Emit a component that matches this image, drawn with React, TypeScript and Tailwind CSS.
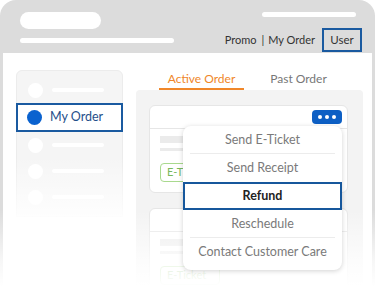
import { ReactNode } from "react";

const font = { fontFamily: "Lato, 'Open Sans', sans-serif" };

const SideRow = () => (
  <div className="flex h-[26px] items-center gap-[9px] pl-[11px]">
    <span className="h-[15px] w-[15px] rounded-full bg-white" />
    <span className="h-[4px] w-[52px] rounded-full bg-white" />
  </div>
);

const DotsButton = () => (
  <div className="flex h-[14px] w-[30px] items-center justify-center gap-[3px] rounded-[4px] bg-[#0d5fc4]">
    <span className="h-[4px] w-[4px] rounded-full bg-white" />
    <span className="h-[4px] w-[4px] rounded-full bg-white" />
    <span className="h-[4px] w-[4px] rounded-full bg-white" />
  </div>
);

const OrderCard = () => (
  <div className="h-[88px] rounded-[6px] border border-[#e6e6e6] bg-white">
    <div className="flex h-[23px] items-center justify-end border-b border-[#e6e6e6] pr-[5px]">
      <DotsButton />
    </div>
    <div className="flex flex-col pl-[10px] pt-[7px]">
      <span className="h-[7px] w-[110px] bg-[#ebebeb]" />
      <span className="mt-[5px] h-[3px] w-[110px] bg-[#ebebeb]" />
      <span className="mt-[12px] flex h-[19px] w-[60px] items-center rounded-[4px] border border-[#a9d98e] pl-[6px] text-[11px] text-[#78b85a]">
        E-Ticket
      </span>
    </div>
  </div>
);

const MenuItem = ({ children, active, sep }: { children: ReactNode; active?: boolean; sep?: boolean }) => (
  <div
    className={
      active
        ? "flex h-[28px] items-center justify-center border-2 border-[#16579c] text-[12.5px] font-bold text-[#222]"
        : "relative flex h-[28px] items-center justify-center text-[12.5px] text-[#7a7a7a]"
    }
  >
    {sep && <span className="absolute inset-x-[7px] bottom-0 h-px bg-[#ececec]" />}
    {children}
  </div>
);

export default function App() {
  return (
    <div className="relative h-[300px] w-[378px] overflow-hidden bg-white" style={font}>
      <div className="h-[300px] w-[375px] rounded-t-[16px] bg-[#dcdcdc] px-[3px]">
        {/* header */}
        <div className="flex h-[53px] justify-between pl-[17px] pr-[10px] pt-[12px]">
          <div className="flex flex-col">
            <span className="h-[17px] w-[81px] rounded-full bg-white" />
            <span className="mt-[9px] h-[5px] w-[154px] rounded-full bg-white" />
          </div>
          <div className="flex flex-col items-end">
            <span className="mr-[6px] h-[5px] w-[94px] rounded-full bg-white" />
            <div className="mt-[11px] flex items-center text-[11px] text-[#333]">
              <span>Promo</span>
              <span className="ml-[5px] mr-[4px]">|</span>
              <span>My Order</span>
              <span className="ml-[7px] flex h-[24px] w-[40px] items-center justify-center border-2 border-[#1a5aa0] text-[11.5px]">
                User
              </span>
            </div>
          </div>
        </div>

        {/* content */}
        <div className="flex h-[247px] items-start gap-[13px] bg-white pl-[13px] pt-[17px]">
          <div className="relative h-[147px] w-[107px] rounded-t-[6px] border border-[#ececec] bg-[#f5f5f5] pt-[6px]">
            <SideRow />
            <div className="-mx-px flex h-[29px] items-center gap-[8px] border-2 border-[#1a5aa0] bg-white pl-[9px]">
              <span className="h-[15px] w-[15px] rounded-full bg-[#0a62cf]" />
              <span className="text-[12.5px] text-[#1f4f8a]">My Order</span>
            </div>
            <SideRow />
            <SideRow />
            <SideRow />
            <div className="absolute inset-x-[-1px] bottom-[-1px] h-[60px] bg-gradient-to-b from-white/0 to-white/90" />
          </div>

          <div className="relative flex h-[230px] w-[227px] flex-col">
            <div className="flex h-[20px] gap-[12px] pl-[23px]">
              <div className="flex w-[85px] justify-center border-b-2 border-[#f0872a] text-[12px] text-[#f0872a]">
                Active Order
              </div>
              <div className="flex w-[85px] justify-center text-[12px] text-[#777]">Past Order</div>
            </div>
            <div className="flex flex-1 flex-col gap-[15px] rounded-t-[4px] bg-[#f3f3f3] pl-[13px] pr-[15px] pt-[15px]">
              <OrderCard />
              <OrderCard />
            </div>
          </div>
        </div>
      </div>

      {/* fade */}
      <div className="absolute inset-x-0 bottom-0 h-[90px] bg-gradient-to-b from-white/0 via-white/75 via-55% to-white to-85%" />

      {/* dropdown */}
      <div className="absolute left-[183px] top-[126px] w-[159px] rounded-[8px] bg-white pb-[4px] shadow-[0_1px_5px_rgba(0,0,0,0.18)]">
        <MenuItem sep>Send E-Ticket</MenuItem>
        <MenuItem>Send Receipt</MenuItem>
        <MenuItem active>Refund</MenuItem>
        <MenuItem sep>Reschedule</MenuItem>
        <MenuItem>Contact Customer Care</MenuItem>
      </div>
    </div>
  );
}
